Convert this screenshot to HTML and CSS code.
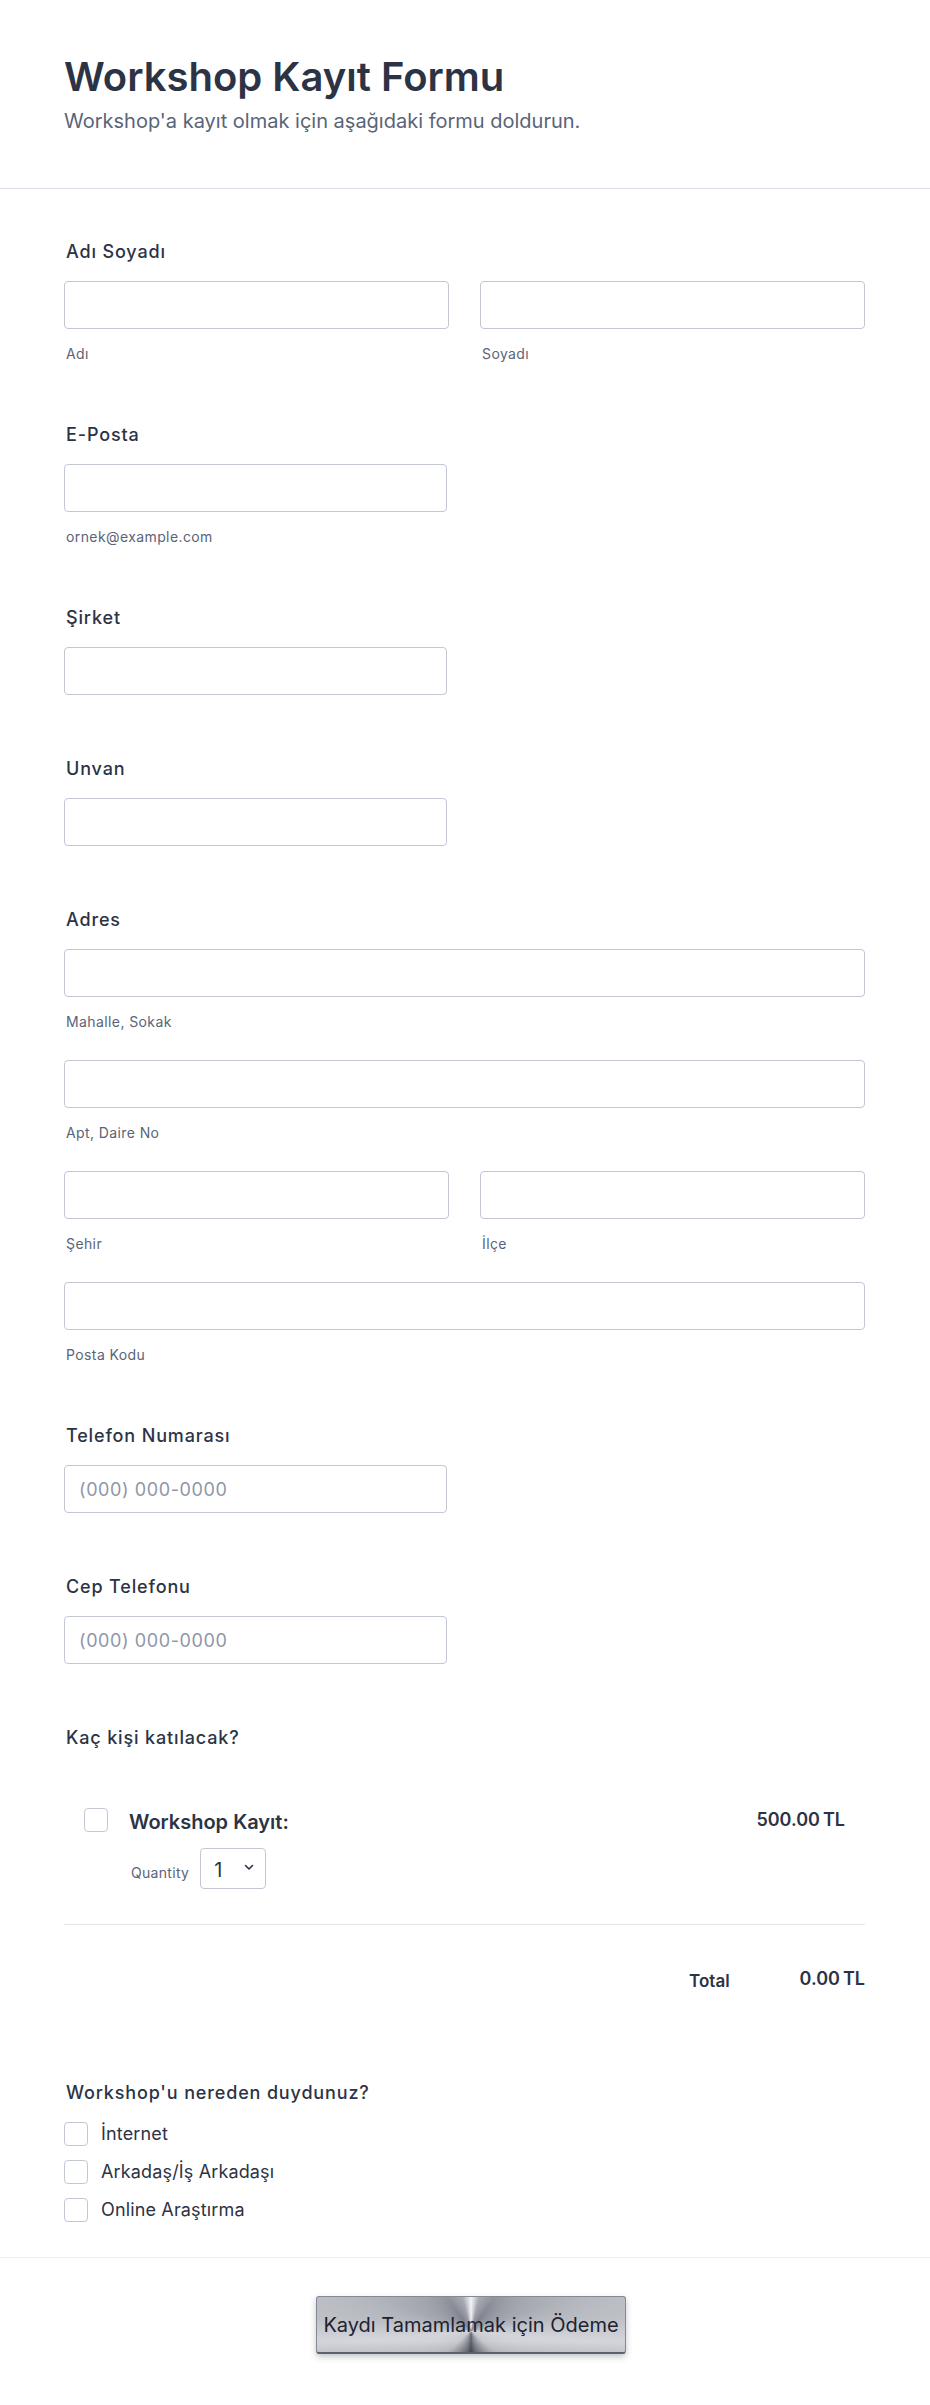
FILE: index.html
```html
<!DOCTYPE html>
<html lang="tr">
<head>
<meta charset="utf-8">
<title>Workshop Kayıt Formu</title>
<link rel="stylesheet" href="styles.css">
</head>
<body>
<div class="page">
  <header class="form-header">
    <h1 class="title">Workshop Kayıt Formu</h1>
    <p class="subtitle">Workshop'a kayıt olmak için aşağıdaki formu doldurun.</p>
  </header>

  <main class="form-body">
    <section class="field">
      <div class="label">Adı Soyadı</div>
      <div class="row2">
        <div class="col"><input class="input" type="text"><span class="sub">Adı</span></div>
        <div class="col"><input class="input" type="text"><span class="sub">Soyadı</span></div>
      </div>
    </section>

    <section class="field">
      <div class="label">E-Posta</div>
      <div class="col half"><input class="input" type="text"><span class="sub">ornek@example.com</span></div>
    </section>

    <section class="field">
      <div class="label">Şirket</div>
      <div class="col half"><input class="input" type="text"></div>
    </section>

    <section class="field">
      <div class="label">Unvan</div>
      <div class="col half"><input class="input" type="text"></div>
    </section>

    <section class="field">
      <div class="label">Adres</div>
      <div class="addr">
        <div class="col"><input class="input" type="text"><span class="sub">Mahalle, Sokak</span></div>
        <div class="col"><input class="input" type="text"><span class="sub">Apt, Daire No</span></div>
        <div class="row2">
          <div class="col"><input class="input" type="text"><span class="sub">Şehir</span></div>
          <div class="col"><input class="input" type="text"><span class="sub">İlçe</span></div>
        </div>
        <div class="col"><input class="input" type="text"><span class="sub">Posta Kodu</span></div>
      </div>
    </section>

    <section class="field">
      <div class="label">Telefon Numarası</div>
      <div class="col half"><input class="input" type="text" placeholder="(000) 000-0000"></div>
    </section>

    <section class="field">
      <div class="label">Cep Telefonu</div>
      <div class="col half"><input class="input" type="text" placeholder="(000) 000-0000"></div>
    </section>

    <section class="field">
      <div class="label">Kaç kişi katılacak?</div>
      <div class="product">
        <div class="product-row">
          <span class="box"></span>
          <div class="product-info">
            <div class="product-name">Workshop Kayıt:</div>
            <div class="qty-row">
              <span class="qty-label">Quantity</span>
              <div class="select">
                <span class="select-val">1</span>
                <svg class="chev" width="10" height="7" viewBox="0 0 10 7"><path d="M1.5 1.5 L5 5 L8.5 1.5" fill="none" stroke="#2c3345" stroke-width="1.6" stroke-linecap="round" stroke-linejoin="round"/></svg>
              </div>
            </div>
          </div>
          <div class="price">500.00&#8239;TL</div>
        </div>
      </div>
      <div class="divider"></div>
      <div class="total-row">
        <span class="total-label">Total</span>
        <span class="total-val">0.00&#8239;TL</span>
      </div>
    </section>

    <section class="field field-last">
      <div class="label">Workshop'u nereden duydunuz?</div>
      <div class="options">
        <div class="option"><span class="box"></span><span class="opt-text">İnternet</span></div>
        <div class="option"><span class="box"></span><span class="opt-text">Arkadaş/İş Arkadaşı</span></div>
        <div class="option"><span class="box"></span><span class="opt-text">Online Araştırma</span></div>
      </div>
    </section>
  </main>

  <footer class="form-footer">
    <button class="submit" type="button">Kaydı Tamamlamak için Ödeme</button>
  </footer>
</div>
</body>
</html>
```

FILE: styles.css
```css
* { box-sizing: border-box; }

html, body {
  margin: 0;
  padding: 0;
  background: #ffffff;
}

body {
  font-family: Inter, "Noto Sans", "Liberation Sans", sans-serif;
  color: #2c3345;
}

.page {
  width: 930px;
  min-height: 2405px;
  background: #ffffff;
}

/* header */
.form-header {
  padding: 53px 64px 52px 64px;
  border-bottom: 1px solid #dcdde6;
}

.title {
  margin: 0;
  font-size: 40px;
  line-height: 48px;
  font-weight: 600;
  color: #2c3345;
}

.subtitle {
  margin: 5px 0 0 0;
  font-size: 20px;
  line-height: 30px;
  font-weight: 400;
  color: #5a6478;
}

/* body */
.form-body {
  padding: 49px 65px 35px 64px;
  display: flex;
  flex-direction: column;
  gap: 60px;
}

.field {
  display: flex;
  flex-direction: column;
}

.label {
  font-size: 18px;
  line-height: 27px;
  font-weight: 450;
  letter-spacing: 0.85px;
  color: #2c3345;
  padding-left: 2px;
  margin-bottom: 16px;
}

.row2 {
  display: grid;
  grid-template-columns: 385px 385px;
  column-gap: 31px;
}

.col {
  display: flex;
  flex-direction: column;
}

.half {
  width: 383px;
}

.input {
  display: block;
  width: 100%;
  height: 48px;
  margin: 0;
  padding: 0 14px;
  border: 1px solid #c3c7d3;
  border-radius: 4px;
  background: #ffffff;
  font-family: Inter, "Noto Sans", sans-serif;
  font-size: 18px;
  letter-spacing: 0.6px;
  color: #2c3345;
  outline: none;
}

.input::placeholder {
  color: #8f96a7;
}

.sub {
  margin-top: 17px;
  font-size: 14px;
  line-height: 15px;
  letter-spacing: 0.4px;
  color: #5a6478;
  padding-left: 2px;
}

.addr {
  display: flex;
  flex-direction: column;
  gap: 31px;
}

/* product */
.product {
  padding: 41px 20px 0 20px;
}

.product-row {
  display: flex;
  align-items: flex-start;
}

.box {
  display: block;
  flex: 0 0 24px;
  width: 24px;
  height: 24px;
  border: 1px solid #c3c7d3;
  border-radius: 4px;
  background: #ffffff;
}

.product-info {
  margin-left: 21px;
  flex: 1;
}

.product-name {
  padding-top: 2px;
  font-size: 20px;
  line-height: 24px;
  font-weight: 600;
  color: #2c3345;
}

.qty-row {
  display: flex;
  align-items: center;
  margin-top: 14px;
}

.qty-label {
  font-size: 14px;
  line-height: 17px;
  letter-spacing: 0.3px;
  color: #5a6478;
  margin-top: 7px;
  margin-left: 2px;
  margin-right: 11px;
}

.select {
  width: 66px;
  height: 41px;
  border: 1px solid #c3c7d3;
  border-radius: 4px;
  display: flex;
  align-items: center;
  padding: 0 0 0 13px;
}

.select-val {
  font-size: 20px;
  line-height: 24px;
  color: #2c3345;
  margin-top: 2px;
}

.chev {
  margin-left: auto;
  margin-right: 11px;
  margin-top: -2px;
}

.price {
  font-size: 18px;
  line-height: 24px;
  font-weight: 600;
  color: #2c3345;
}

.divider {
  margin-top: 35px;
  height: 1px;
  background: #e4e5ed;
}

.total-row {
  margin-top: 42px;
  display: flex;
  justify-content: flex-end;
  align-items: flex-start;
  gap: 70px;
}

.total-label {
  padding-top: 2px;
  font-size: 17px;
  line-height: 24px;
  font-weight: 600;
  color: #2c3345;
}

.total-val {
  font-size: 18px;
  line-height: 24px;
  font-weight: 600;
  color: #2c3345;
}

.field-last {
  margin-top: 26px;
}

.options {
  display: flex;
  flex-direction: column;
  gap: 14px;
}

.option {
  display: flex;
  align-items: center;
  gap: 13px;
}

.opt-text {
  font-size: 18px;
  line-height: 24px;
  letter-spacing: 0.15px;
  color: #2c3345;
}

/* footer */
.form-footer {
  border-top: 1px solid #eceef3;
  padding: 38px 0 50px 12px;
  display: flex;
  justify-content: center;
}

.submit {
  width: 310px;
  height: 58px;
  padding: 0;
  border: 1px solid #868993;
  border-bottom: 2px solid #5e616b;
  border-radius: 3px;
  font-family: Inter, "Noto Sans", sans-serif;
  font-size: 20px;
  font-weight: 400;
  color: #1e2230;
  background:
    linear-gradient(180deg, rgba(255,255,255,0.15) 0%, rgba(255,255,255,0) 40%, rgba(255,255,255,0.12) 80%, rgba(0,0,0,0.05) 100%),
    conic-gradient(from 0deg at 50% 62%,
      #f2f3f6 0deg, #9a9da6 14deg, #7f828c 35deg, #a3a6ae 70deg,
      #cfd1d7 95deg, #bfc1c8 130deg, #6e717b 168deg, #474a53 180deg,
      #6e717b 192deg, #bfc1c8 230deg, #cfd1d7 265deg, #a3a6ae 290deg,
      #7f828c 325deg, #9a9da6 346deg, #f2f3f6 360deg);
  box-shadow: 0 3px 6px rgba(60, 65, 80, 0.3);
}
```
